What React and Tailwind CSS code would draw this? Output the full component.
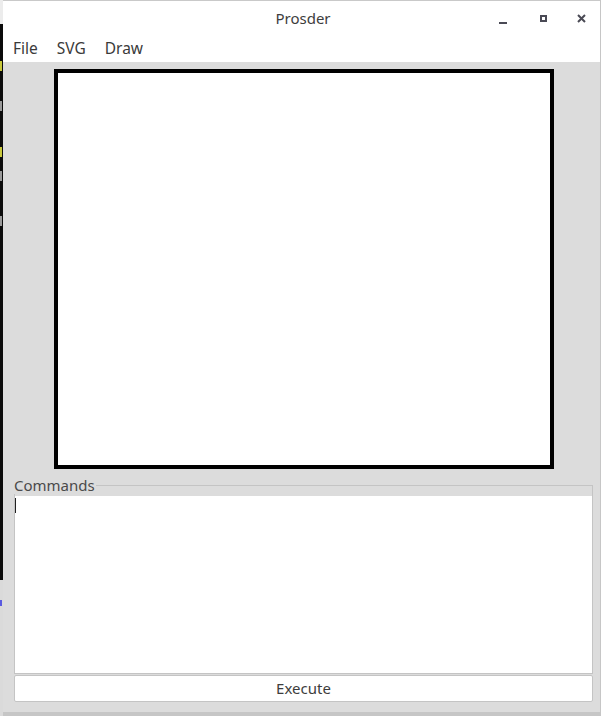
// Prosder main window
const FONT = { fontFamily: '"Noto Sans", "Open Sans", sans-serif' };

const MENU = ['File', 'SVG', 'Draw'];

// bits of the terminal peeking out behind the window
const Backdrop = () => (
  <div className="flex w-[3px] flex-col">
    <div className="h-[24px] bg-[#ececec]" />
    <div className="relative h-[556px] bg-[#0b0b0b]">
      <span className="absolute left-0 top-[37px] h-[10px] w-[2px] bg-[#c8c83c]" />
      <span className="absolute left-0 top-[77px] h-[10px] w-[2px] bg-[#9a9a9a]" />
      <span className="absolute left-0 top-[123px] h-[10px] w-[2px] bg-[#c8c83c]" />
      <span className="absolute left-0 top-[147px] h-[10px] w-[2px] bg-[#9a9a9a]" />
      <span className="absolute left-0 top-[192px] h-[10px] w-[2px] bg-[#9a9a9a]" />
    </div>
    <div className="relative flex-1 bg-[#dadada]">
      <span className="absolute left-0 top-[20px] h-[6px] w-[2px] bg-[#5a5ae0]" />
    </div>
  </div>
);

const TitleBar = () => (
  <div className="relative flex h-[35px] items-center justify-center border-t border-[#c9c9c9] bg-white">
    <span className="ml-[3px] text-[15px] text-[#3d3d3d]">Prosder</span>
    <div className="absolute right-0 top-0 flex h-full items-center">
      <button className="flex h-full w-[38px] items-center justify-center pr-[6px]">
        <span className="mt-[9px] h-[2px] w-[8px] bg-[#4a4a55]" />
      </button>
      <button className="flex h-full w-[38px] items-center justify-center pr-[2px]">
        <span className="h-[7px] w-[7px] border-2 border-[#4a4a55]" />
      </button>
      <button className="flex h-full w-[37px] items-center justify-center">
        <svg width="9" height="9" viewBox="0 0 9 9">
          <path d="M1 1L8 8M8 1L1 8" stroke="#4a4a55" strokeWidth="2" />
        </svg>
      </button>
    </div>
  </div>
);

export default function App() {
  return (
    <div className="flex h-[716px] w-[601px] overflow-hidden bg-[#c6c6c6]" style={FONT}>
      <Backdrop />
      <div className="flex h-[712px] w-[597px] flex-col bg-[#dcdcdc]">
        <TitleBar />
        <div className="flex h-[27px] items-center gap-[19px] bg-white pl-[10px] text-[15.5px] text-[#3a3a3a]">
          {MENU.map((m) => (
            <span key={m}>{m}</span>
          ))}
        </div>

        <div className="flex flex-1 flex-col pl-[11px] pr-[7px] pt-[7px]">
          <div className="ml-[40px] h-[400px] w-[500px] border-4 border-black bg-white" />

          <fieldset className="mt-[7px] border border-[#c4c4c4] p-0 pt-[2px]">
            <legend className="ml-[-1px] pr-[1px] text-[15px] leading-[18px] text-[#4a4a4a]">Commands</legend>
            <div className="relative h-[177px] bg-white">
              <span className="absolute left-0 top-[2px] h-[15px] w-px bg-[#222]" />
            </div>
          </fieldset>

          <button className="mt-px h-[27px] w-full rounded-[2px] border border-[#c4c4c4] bg-white text-[15px] text-[#3d3d3d]">
            Execute
          </button>
        </div>
      </div>
    </div>
  );
}
